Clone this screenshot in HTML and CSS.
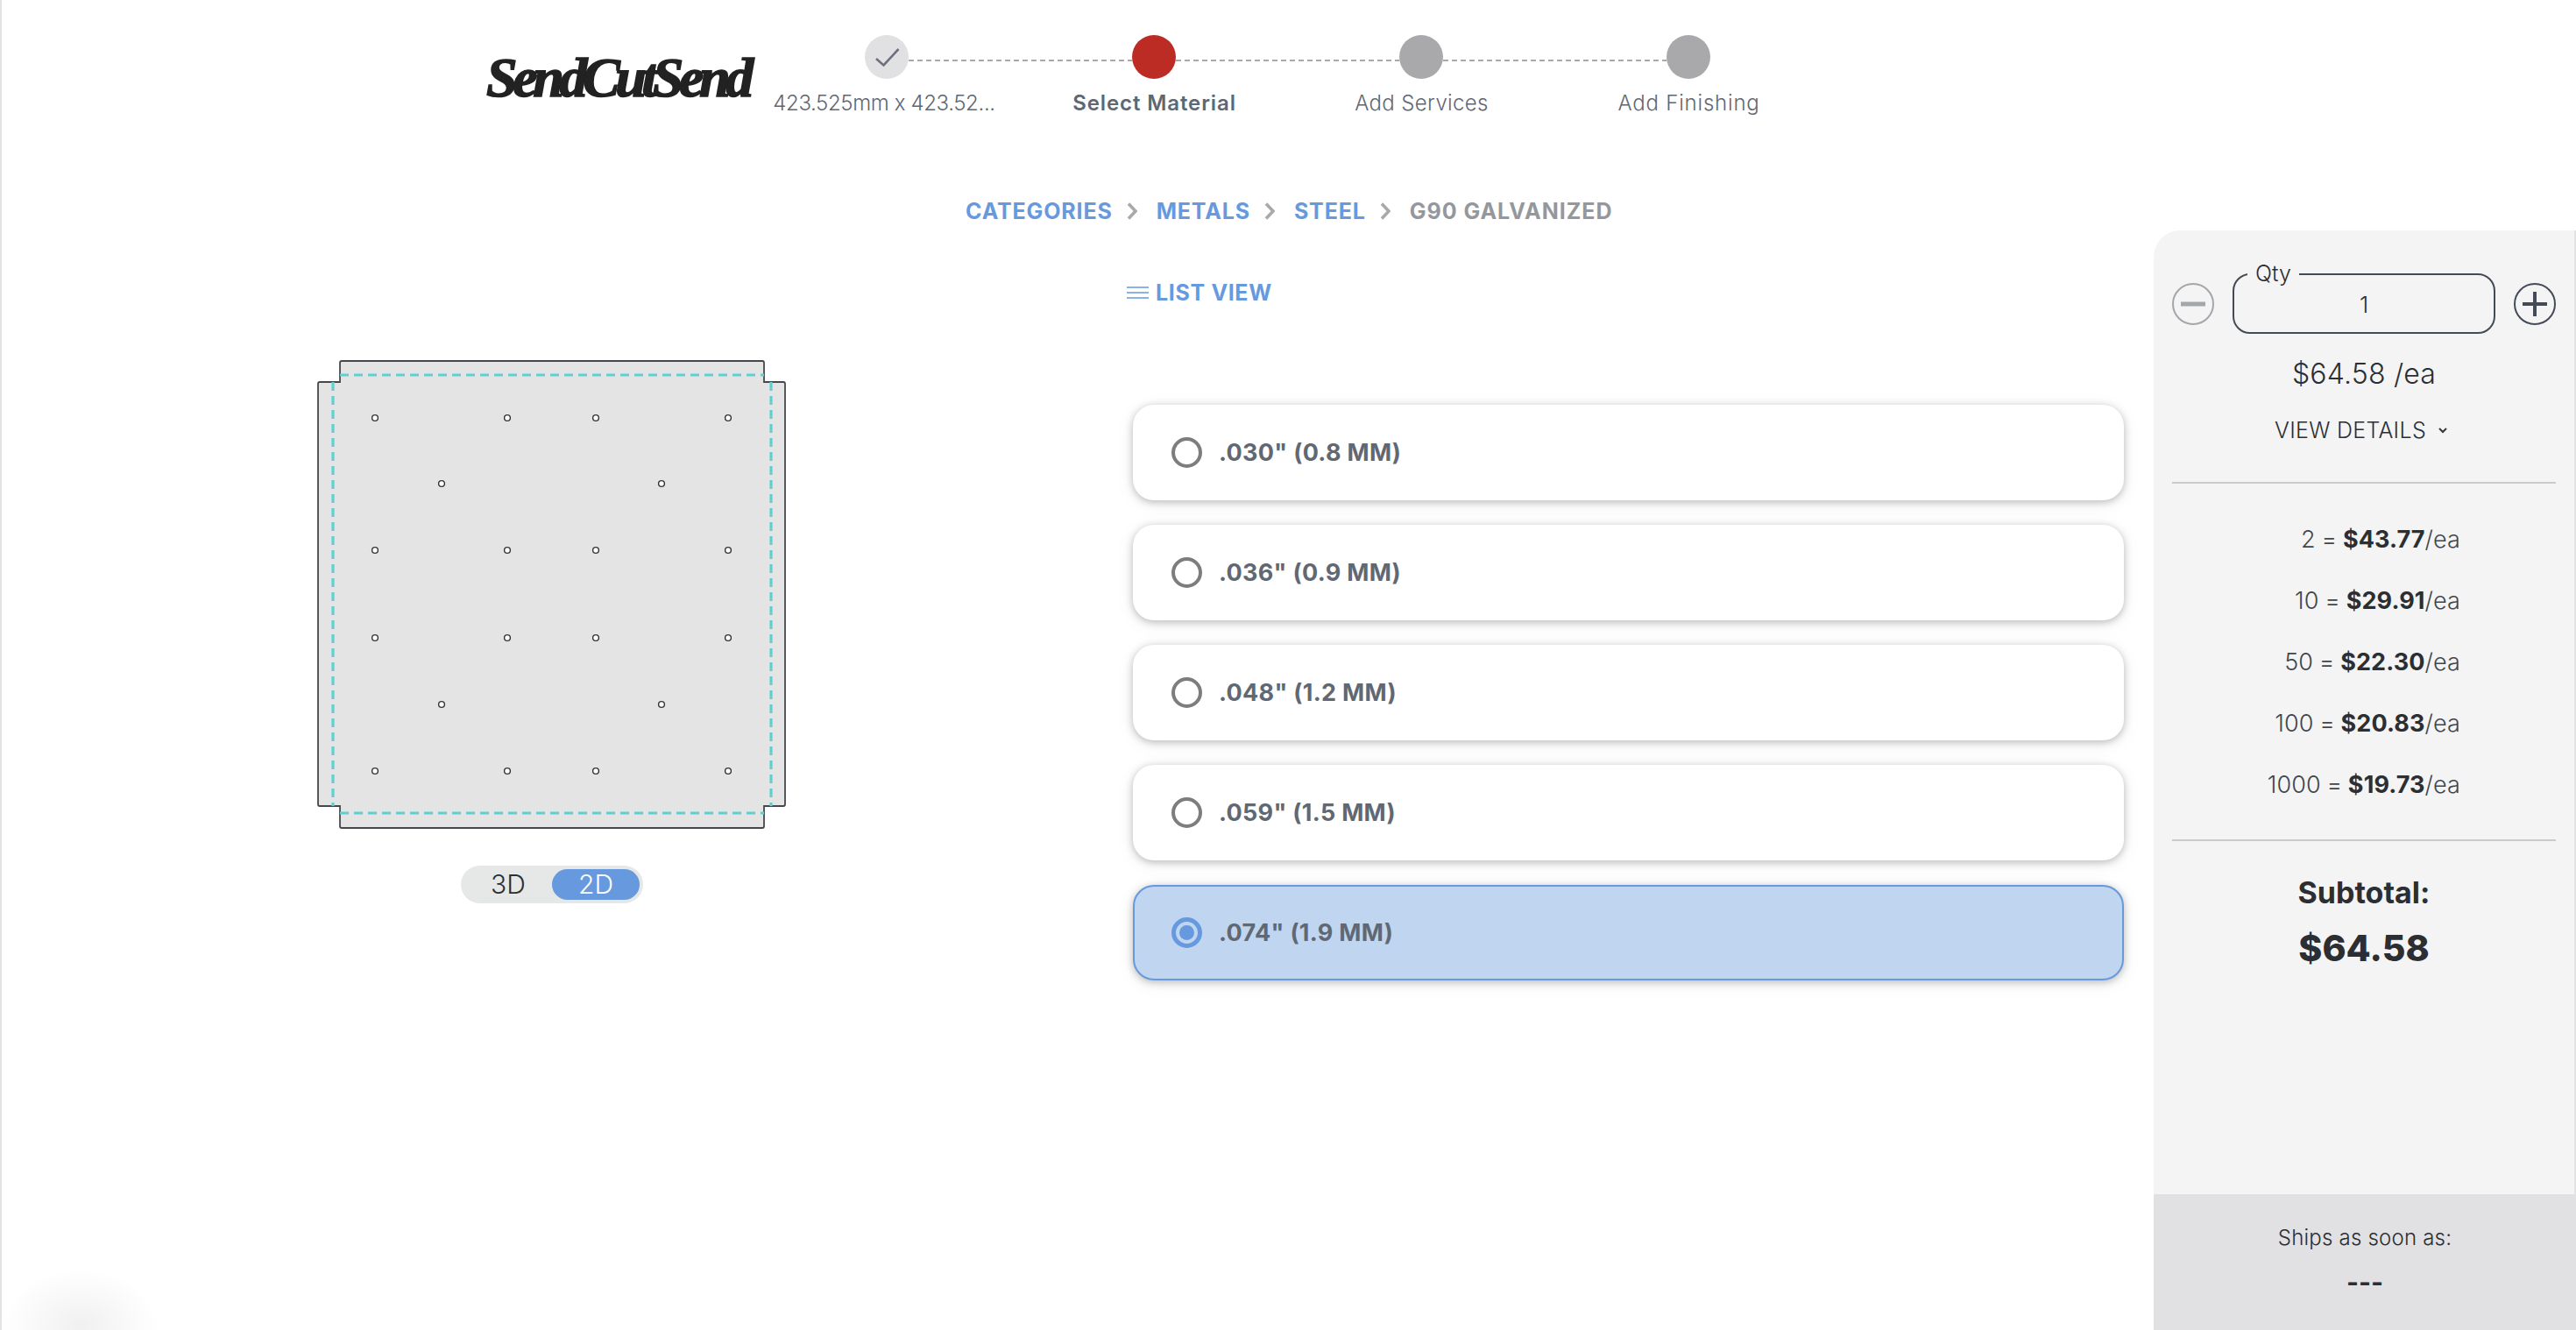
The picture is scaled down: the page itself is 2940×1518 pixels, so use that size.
FILE: index.html
```html
<!DOCTYPE html>
<html lang="en">
<head>
    <meta charset="UTF-8">
    <meta name="viewport" content="width=device-width, initial-scale=1.0">
    <title>Select Material</title>
    <link rel="stylesheet" href="styles.css">
</head>
<body>
    <div class="page">
        <div class="content">
            <header class="header">
                <div class="logo">SendCutSend</div>
                <div class="stepper">
                    <div class="track">
                        <span class="dot dot-done">
                            <svg viewBox="0 0 50 50" width="50" height="50"><path d="M13 27L21.5 34.5L38.5 16" fill="none" stroke="#6b727c" stroke-width="2.6"/></svg>
                        </span>
                        <span class="track-line"></span>
                        <span class="dot dot-active"></span>
                        <span class="track-line"></span>
                        <span class="dot"></span>
                        <span class="track-line"></span>
                        <span class="dot"></span>
                    </div>
                    <div class="step-labels">
                        <span class="step-size">423.525mm x 423.52...</span>
                        <span class="step-current">Select Material</span>
                        <span>Add Services</span>
                        <span class="step-last">Add Finishing</span>
                    </div>
                </div>
            </header>

            <nav class="crumbs">
                <a>CATEGORIES</a>
                <svg class="crumb-arrow" viewBox="0 0 12 20" width="12" height="20"><path d="M2 1.5L10 10L2 18.5" fill="none" stroke="#a9a9a9" stroke-width="3.6"/></svg>
                <a>METALS</a>
                <svg class="crumb-arrow" viewBox="0 0 12 20" width="12" height="20"><path d="M2 1.5L10 10L2 18.5" fill="none" stroke="#a9a9a9" stroke-width="3.6"/></svg>
                <a>STEEL</a>
                <svg class="crumb-arrow" viewBox="0 0 12 20" width="12" height="20"><path d="M2 1.5L10 10L2 18.5" fill="none" stroke="#a9a9a9" stroke-width="3.6"/></svg>
                <span class="crumb-current">G90 GALVANIZED</span>
            </nav>

            <div class="workspace">
                <section class="preview">
                    <svg class="part" viewBox="361 410 537 537" width="537" height="537">
                        <path class="part-body" d="M390 412H870a2 2 0 0 1 2 2V436H894a2 2 0 0 1 2 2V918a2 2 0 0 1-2 2H872V943a2 2 0 0 1-2 2H390a2 2 0 0 1-2-2V920H365a2 2 0 0 1-2-2V438a2 2 0 0 1 2-2H388V414a2 2 0 0 1 2-2Z"/>
                        <path class="part-bend" d="M388 428H872M380 436V920M880 436V920M388 928H872"/>
                        <g class="part-holes">
                            <circle cx="428" cy="477" r="3.4"/><circle cx="579" cy="477" r="3.4"/><circle cx="680" cy="477" r="3.4"/><circle cx="831" cy="477" r="3.4"/>
                            <circle cx="504" cy="552" r="3.4"/><circle cx="755" cy="552" r="3.4"/>
                            <circle cx="428" cy="628" r="3.4"/><circle cx="579" cy="628" r="3.4"/><circle cx="680" cy="628" r="3.4"/><circle cx="831" cy="628" r="3.4"/>
                            <circle cx="428" cy="728" r="3.4"/><circle cx="579" cy="728" r="3.4"/><circle cx="680" cy="728" r="3.4"/><circle cx="831" cy="728" r="3.4"/>
                            <circle cx="504" cy="804" r="3.4"/><circle cx="755" cy="804" r="3.4"/>
                            <circle cx="428" cy="880" r="3.4"/><circle cx="579" cy="880" r="3.4"/><circle cx="680" cy="880" r="3.4"/><circle cx="831" cy="880" r="3.4"/>
                        </g>
                    </svg>
                    <div class="view-toggle">
                        <span class="view-btn">3D</span>
                        <span class="view-btn view-btn-on">2D</span>
                    </div>
                </section>

                <section class="options">
                    <a class="list-view">
                        <svg viewBox="0 0 25 16" width="25" height="16"><path d="M0 2H25M0 8H25M0 14H25" fill="none" stroke="#6699dd" stroke-width="1.6"/></svg>
                        LIST VIEW
                    </a>
                    <div class="option-list">
                        <label class="option"><span class="radio"></span>.030" (0.8 MM)</label>
                        <label class="option"><span class="radio"></span>.036" (0.9 MM)</label>
                        <label class="option"><span class="radio"></span>.048" (1.2 MM)</label>
                        <label class="option"><span class="radio"></span>.059" (1.5 MM)</label>
                        <label class="option option-on"><span class="radio"></span>.074" (1.9 MM)</label>
                    </div>
                </section>
            </div>
        </div>

        <aside class="side">
            <div class="side-top">
                <div class="qty-row">
                    <span class="qty-btn qty-btn-off">
                        <svg viewBox="0 0 44 44" width="44" height="44"><path d="M8 22H36" stroke="#a3a6aa" stroke-width="5" fill="none"/></svg>
                    </span>
                    <div class="qty-box">
                        <span class="qty-label">Qty</span>
                        1
                    </div>
                    <span class="qty-btn">
                        <svg viewBox="0 0 44 44" width="44" height="44"><path d="M8 22H36M22 8V36" stroke="#444b57" stroke-width="4" fill="none"/></svg>
                    </span>
                </div>
                <div class="unit-price">$64.58 /ea</div>
                <div class="view-details">VIEW DETAILS
                    <svg viewBox="0 0 10 7" width="10" height="7"><path d="M1 1L5 5L9 1" fill="none" stroke="#33373d" stroke-width="2"/></svg>
                </div>
                <div class="rule rule-first"></div>
                <ul class="breaks">
                    <li>2 = <b>$43.77</b>/ea</li>
                    <li>10 = <b>$29.91</b>/ea</li>
                    <li>50 = <b>$22.30</b>/ea</li>
                    <li>100 = <b>$20.83</b>/ea</li>
                    <li>1000 = <b>$19.73</b>/ea</li>
                </ul>
                <div class="rule rule-second"></div>
                <div class="subtotal-label">Subtotal:</div>
                <div class="subtotal">$64.58</div>
            </div>
            <div class="ships">
                <div class="ships-label">Ships as soon as:</div>
                <div class="ships-date">---</div>
            </div>
        </aside>

        <div class="chat-glow"></div>
    </div>
</body>
</html>
```

FILE: styles.css
```css
* {
    box-sizing: border-box;
}
html, body {
    margin: 0;
    background: #fff;
}
body {
    font-family: Inter, "Open Sans", sans-serif;
    color: #2b2e33;
}
.page {
    position: relative;
    display: flex;
    width: 2940px;
    height: 1518px;
    overflow: hidden;
    border-left: 2px solid #e3e3e3;
}
.content {
    width: 2456px;
}

/* header */
.header {
    display: flex;
    height: 200px;
    padding: 40px 0 0 553px;
}
.logo {
    width: 305px;
    height: 70px;
    margin-top: 14px;
    font-family: "Liberation Serif", serif;
    font-size: 64px;
    font-style: italic;
    font-weight: 700;
    line-height: 70px;
    letter-spacing: -5.4px;
    color: #222;
    -webkit-text-stroke: 1.6px #222;
    white-space: nowrap;
}
.track {
    display: flex;
    align-items: flex-start;
    margin-left: 127px;
    width: 965px;
}
.dot {
    flex: none;
    width: 50px;
    height: 50px;
    border-radius: 50%;
    background: #a9a9ac;
}
.dot svg {
    display: block;
}
.dot-done {
    background: #e1e1e3;
}
.dot-active {
    background: #bd2b25;
}
.track-line {
    flex: 1;
    height: 2px;
    margin-top: 28px;
    background: repeating-linear-gradient(90deg, #a9a9ac 0 6px, transparent 6px 10px);
}
.step-labels {
    display: grid;
    grid-template-columns: repeat(4, 305px);
    margin-top: 13px;
    font-size: 24px;
    font-weight: 300;
    line-height: 30px;
    letter-spacing: 0.35px;
    text-align: center;
    color: #5f6772;
}
.step-size {
    padding-right: 7px;
    letter-spacing: -0.37px;
}
.step-current {
    font-weight: 600;
    letter-spacing: 0.9px;
}
.step-last {
    letter-spacing: 0.8px;
}

/* breadcrumbs */
.crumbs {
    display: flex;
    align-items: center;
    height: 40px;
    margin-top: 21px;
    padding-left: 1100px;
    font-size: 25px;
    font-weight: 700;
    letter-spacing: 0.85px;
    color: #6699dd;
}
.crumb-arrow {
    margin: 0 22px 0 16px;
}
.crumb-current {
    letter-spacing: 1px;
    color: #94979c;
}

/* main area */
.workspace {
    display: flex;
    margin-top: 53px;
}
.preview {
    display: flex;
    flex-direction: column;
    width: 1284px;
    padding: 96px 0 0 359px;
}
.part {
    display: block;
}
.part-body {
    fill: #e4e4e4;
    stroke: #44474c;
    stroke-width: 1.8;
}
.part-bend {
    fill: none;
    stroke: #5fcfcf;
    stroke-width: 3.2;
    stroke-dasharray: 10 6;
}
.part-holes circle {
    fill: #fff;
    stroke: #333;
    stroke-width: 1.4;
}
.view-toggle {
    display: flex;
    align-items: center;
    justify-content: flex-end;
    width: 208px;
    height: 43px;
    margin: 41px 0 0 165px;
    padding-right: 4px;
    border-radius: 22px;
    background: #e6e7e7;
}
.view-btn {
    width: 100px;
    height: 35px;
    font-size: 30px;
    font-weight: 300;
    line-height: 35px;
    text-align: center;
}
.view-btn-on {
    border-radius: 18px;
    background: #6699dd;
    color: #fff;
}
.options {
    width: 1138px;
}
.list-view {
    display: flex;
    align-items: center;
    gap: 8px;
    height: 40px;
    font-size: 25px;
    font-weight: 700;
    letter-spacing: 0.65px;
    color: #6699dd;
}
.option-list {
    display: flex;
    flex-direction: column;
    gap: 28px;
    margin: 108px 0 0 7px;
}
.option {
    display: flex;
    align-items: center;
    height: 109px;
    padding-left: 44px;
    border-radius: 24px;
    background: #fff;
    box-shadow: 0 2px 10px rgba(0, 0, 0, 0.26), 0 4px 24px rgba(0, 0, 0, 0.05);
    font-size: 27px;
    font-weight: 700;
    letter-spacing: 0.3px;
    color: #5f6873;
}
.radio {
    flex: none;
    width: 35px;
    height: 35px;
    margin-right: 19px;
    border: 4px solid #7d7d7d;
    border-radius: 50%;
}
.option-on {
    border: 2px solid #6699dd;
    padding-left: 42px;
    background: #c0d5f0;
}
.option-on .radio {
    border: 5px solid #6699dd;
    padding: 4px;
    background: #6699dd content-box;
}

/* quote panel */
.side {
    display: flex;
    flex-direction: column;
    width: 482px;
    margin-top: 263px;
}
.side-top {
    flex: 1;
    padding: 49px 21px 0;
    border-right: 2px solid #e3e3e3;
    border-top-left-radius: 30px;
    background: #f4f4f4;
}
.qty-row {
    display: flex;
    align-items: center;
}
.qty-btn {
    display: flex;
    align-items: center;
    justify-content: center;
    flex: none;
    width: 48px;
    height: 48px;
    border: 2px solid #444b57;
    border-radius: 50%;
}
.qty-btn-off {
    border-color: #a3a6aa;
}
.qty-box {
    position: relative;
    flex: 1;
    height: 69px;
    margin: 0 21px;
    border: 2px solid #444b55;
    border-radius: 20px;
    font-size: 26px;
    font-weight: 300;
    line-height: 68px;
    text-align: center;
}
.qty-label {
    position: absolute;
    top: -16px;
    left: 15px;
    padding: 0 9px;
    background: #f4f4f4;
    font-size: 25px;
    line-height: 28px;
}
.unit-price {
    margin-top: 26px;
    font-size: 32px;
    font-weight: 300;
    line-height: 40px;
    letter-spacing: 0.2px;
    text-align: center;
}
.view-details {
    display: flex;
    align-items: center;
    justify-content: center;
    gap: 14px;
    margin-top: 29px;
    padding-right: 7px;
    font-size: 25px;
    font-weight: 300;
    line-height: 30px;
    letter-spacing: 0.3px;
}
.rule {
    height: 2px;
    background: #cbcbcb;
}
.rule-first {
    margin-top: 44px;
}
.rule-second {
    margin-top: 27px;
}
.breaks {
    margin: 29px 0 0;
    padding: 0 109px 0 0;
    list-style: none;
    font-size: 27px;
    font-weight: 300;
    line-height: 70px;
    letter-spacing: 0.1px;
    word-spacing: -1px;
    text-align: right;
    color: #41464d;
}
.breaks b {
    font-weight: 700;
    color: #2b2e33;
}
.subtotal-label {
    margin-top: 39px;
    font-size: 34px;
    font-weight: 700;
    line-height: 40px;
    text-align: center;
}
.subtotal {
    margin-top: 18px;
    font-size: 41px;
    font-weight: 800;
    line-height: 50px;
    text-align: center;
}
.ships {
    height: 155px;
    padding-top: 35px;
    background: #e1e1e3;
    text-align: center;
}
.ships-label {
    font-size: 24px;
    font-weight: 300;
    line-height: 30px;
    letter-spacing: 0.2px;
}
.ships-date {
    margin-top: 20px;
    font-size: 30px;
    font-weight: 700;
    line-height: 30px;
}
.chat-glow {
    position: absolute;
    left: 0;
    bottom: -60px;
    width: 180px;
    height: 130px;
    background: radial-gradient(closest-side, rgba(0, 0, 0, 0.06), rgba(0, 0, 0, 0));
}
```
